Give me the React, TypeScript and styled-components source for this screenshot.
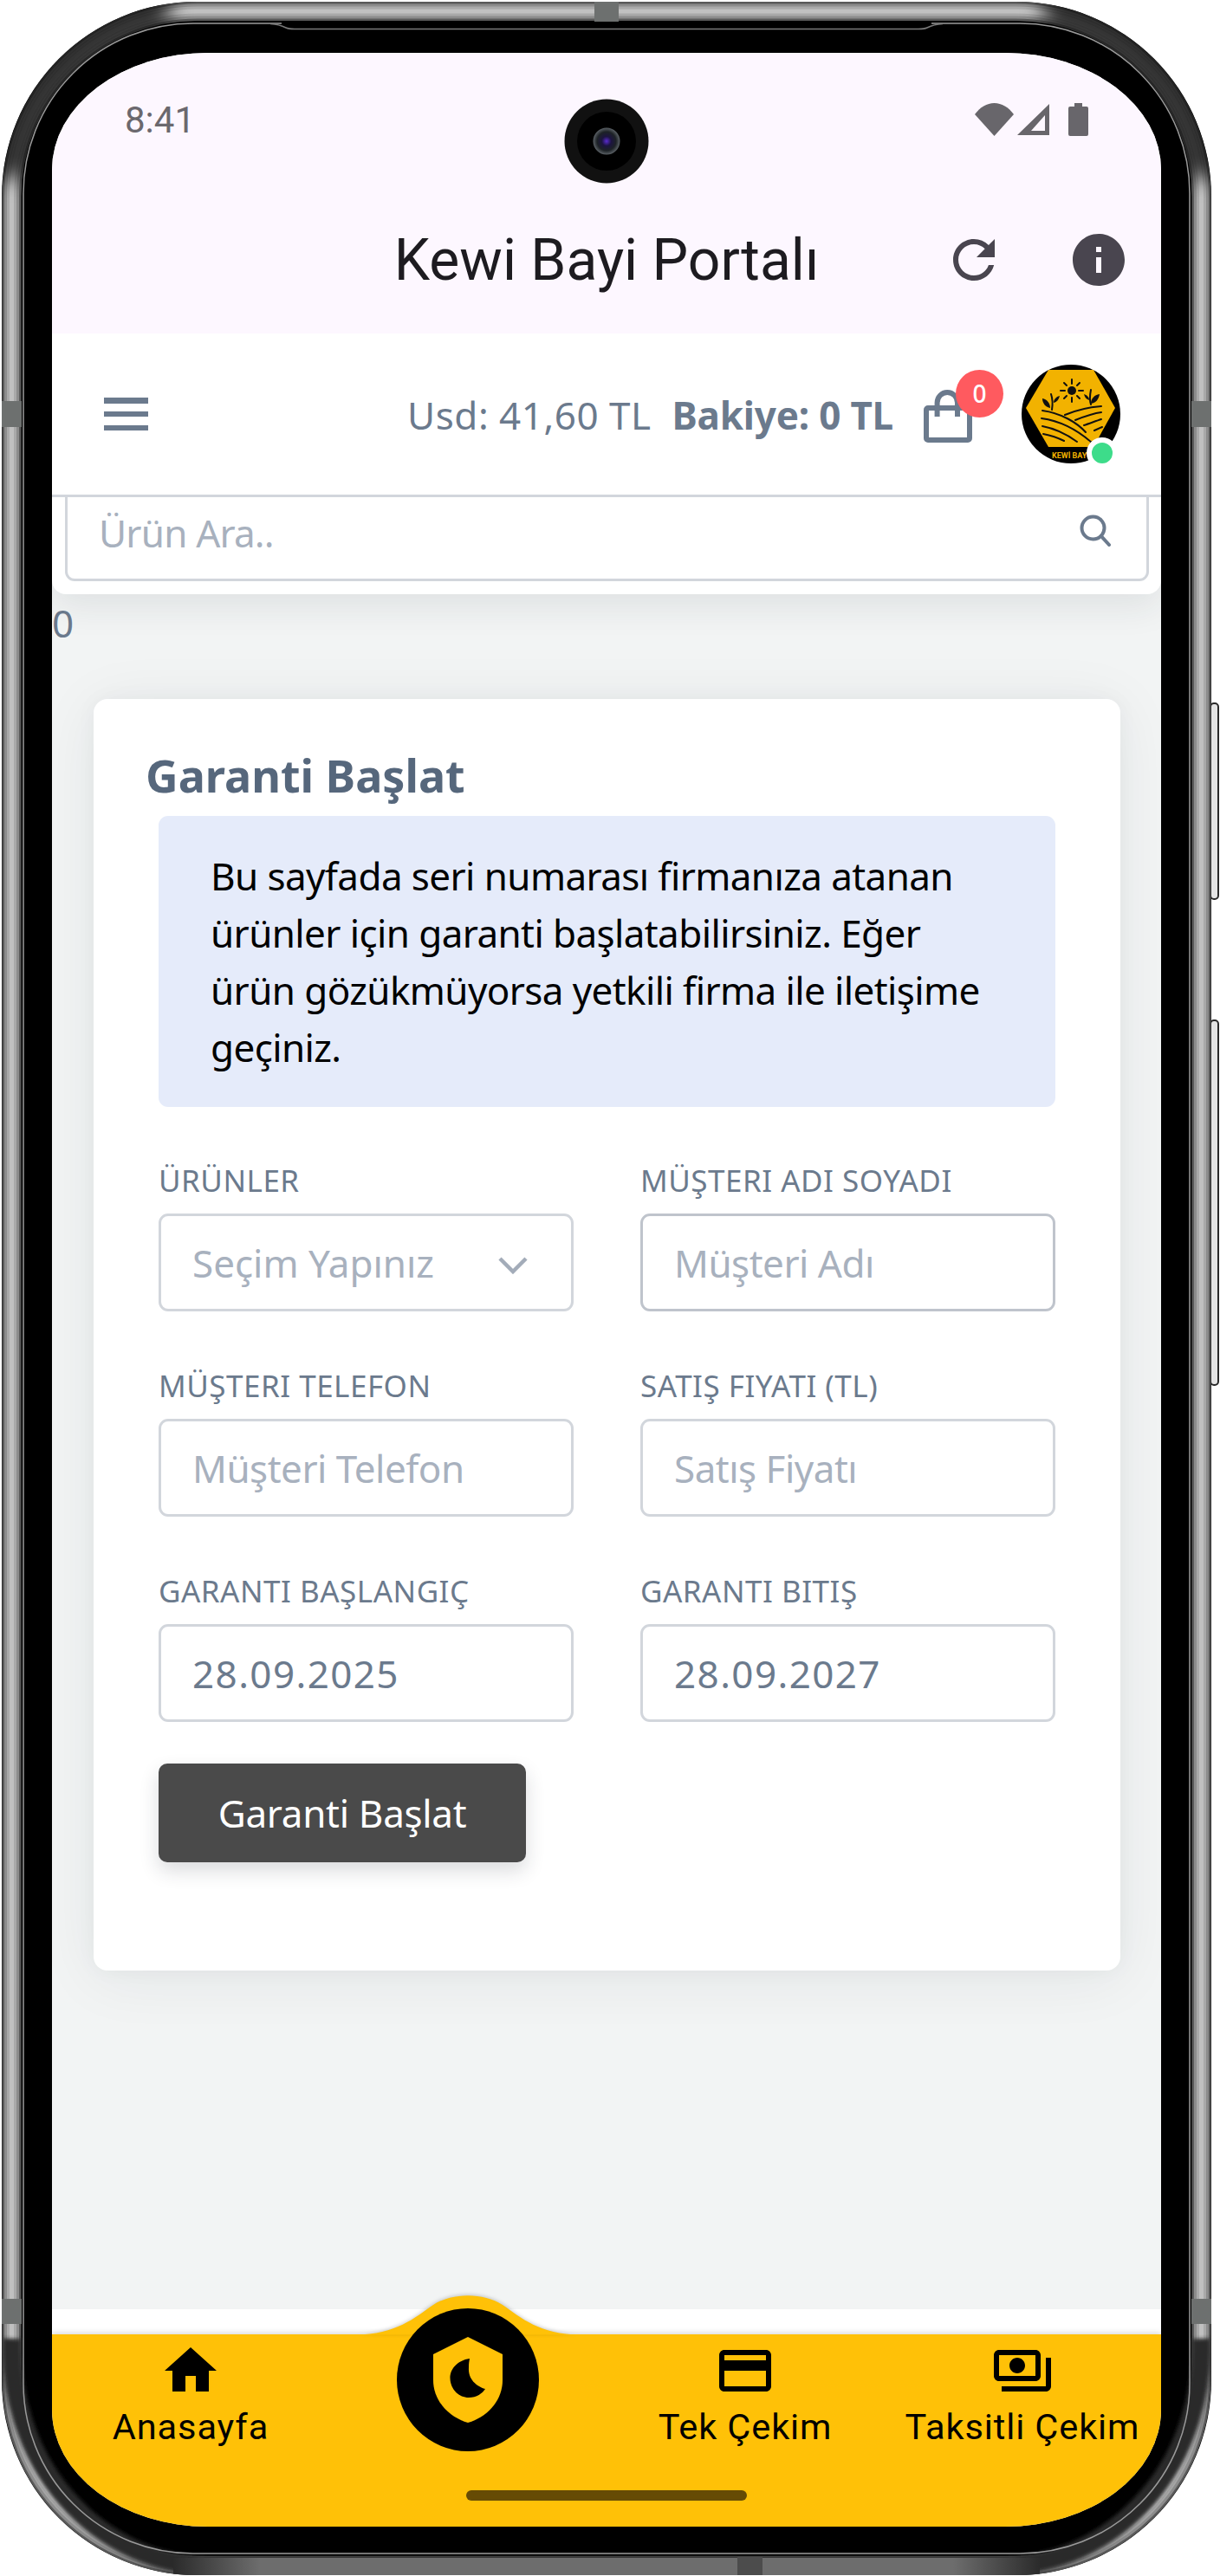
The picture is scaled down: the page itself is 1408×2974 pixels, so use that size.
import React from 'react';
import styled, { createGlobalStyle } from 'styled-components';

const PLEX = `"Noto Sans", "Open Sans", sans-serif`;
const ROBOTO = `Roboto, "Liberation Sans", sans-serif`;
const SLATE = '#6b7a8d';
const YELLOW = '#ffc107';

const Global = createGlobalStyle`
  html, body { margin: 0; padding: 0; background: #fff; }
  * { box-sizing: border-box; }
  #root { width: 1408px; height: 2974px; }
`;

const Device = styled.div`
  position: relative;
  width: 1408px;
  height: 2974px;
  padding: 61px 68px 57px 60px;
  overflow: hidden;
`;
const FrameArt = styled.svg`
  position: absolute;
  left: 0;
  top: 0;
`;
const Screen = styled.div`
  position: relative;
  width: 1280px;
  height: 2856px;
  border-radius: 180px / 135px;
  overflow: hidden;
  display: flex;
  flex-direction: column;
  background: #f2f4f4;
  font-family: ${PLEX};
`;
const AppHeader = styled.header`
  background: #fdf7ff;
  height: 324px;
  flex: none;
  position: relative;
`;
const StatusBar = styled.div`
  height: 154px;
  padding: 0 84px 0 84px;
  display: flex;
  align-items: center;
  justify-content: space-between;
`;
const Clock = styled.span`
  font: 400 42px ${ROBOTO};
  color: #6b686e;
`;
const StatusIcons = styled.div`
  display: flex;
  align-items: center;
  gap: 4px;
`;
const Camera = styled.svg`
  position: absolute;
  left: 591px;
  top: 53px;
`;
const TitleRow = styled.div`
  height: 170px;
  display: grid;
  grid-template-columns: 1fr auto 1fr;
  align-items: center;
`;
const Title = styled.h1`
  grid-column: 2;
  margin: 0;
  font: 400 66px ${ROBOTO};
  color: #1d1b20;
`;
const HeaderActions = styled.div`
  grid-column: 3;
  justify-self: end;
  margin-right: 36px;
  display: flex;
  gap: 72px;
  color: #49454f;
`;
const NavBar = styled.nav`
  flex: none;
  height: 189px;
  background: #fff;
  border-bottom: 3px solid #d2d6dc;
  display: flex;
  align-items: center;
  justify-content: space-between;
  padding: 0 47px 0 60px;
  position: relative;
  z-index: 2;
`;
const NavRight = styled.div`
  display: flex;
  align-items: center;
`;
const UsdText = styled.span`
  font-size: 44px;
  color: ${SLATE};
  letter-spacing: 0.5px;
  margin: 2px 24px 0 0;
`;
const BalanceText = styled.strong`
  font-size: 44px;
  font-weight: 700;
  color: ${SLATE};
  letter-spacing: -0.2px;
  margin: 2px 35px 0 0;
`;
const BagWrap = styled.div`
  position: relative;
  width: 56px;
  height: 61px;
  margin-right: 57px;
  margin-top: 4px;
`;
const Badge = styled.span`
  position: absolute;
  left: 37px;
  top: -23px;
  width: 55px;
  height: 55px;
  border-radius: 50%;
  background: #ff5a5f;
  color: #fff;
  font-size: 28px;
  font-weight: 500;
  display: flex;
  align-items: center;
  justify-content: center;
`;
const AvatarWrap = styled.div`
  position: relative;
  width: 114px;
  height: 114px;
`;
const OnlineDot = styled.span`
  position: absolute;
  left: 75px;
  top: 84px;
  width: 36px;
  height: 36px;
  border-radius: 50%;
  background: #3ddc8a;
  border: 6px solid #fff;
`;
const SearchWrap = styled.div`
  flex: none;
  height: 112px;
  background: #fff;
  padding: 0 14px 0 15px;
  border-radius: 0 0 16px 16px;
  box-shadow: 0 14px 40px rgba(30, 40, 50, 0.09);
  position: relative;
  z-index: 1;
`;
const SearchBox = styled.div`
  position: relative;
  margin-top: -15px;
  height: 112px;
`;
const BaseInput = styled.input<{ $focused?: boolean }>`
  display: block;
  width: 100%;
  height: 100%;
  padding: 0 36px;
  border: 3px solid ${p => (p.$focused ? '#bfc4cc' : '#d2d6dc')};
  border-radius: 11px;
  background: #fff;
  outline: none;
  font-family: ${PLEX};
  font-size: 44px;
  letter-spacing: 1.4px;
  color: ${SLATE};
  &::placeholder { color: #a8b1be; opacity: 1; letter-spacing: -0.5px; }
`;
const SearchInput = styled(BaseInput)`
  &::placeholder { letter-spacing: -0.8px; }
`;
const SearchGlyph = styled.svg`
  position: absolute;
  right: 44px;
  top: 34px;
  color: ${SLATE};
`;
const Main = styled.main`
  flex: 1;
  min-height: 0;
  padding: 0 47px 0 0;
`;
const Stray = styled.div`
  font-size: 44px;
  line-height: 66px;
  color: ${SLATE};
`;
const Card = styled.section`
  margin: 55px 0 0 48px;
  height: 1468px;
  padding: 49px 75px 0;
  background: #fff;
  border-radius: 16px;
  box-shadow: 0 8px 70px rgba(30, 40, 50, 0.07), 0 0 24px rgba(30, 40, 50, 0.04);
`;
const CardTitle = styled.h2`
  margin: 0 0 8px -15px;
  font-size: 52px;
  line-height: 78px;
  font-weight: 700;
  color: #56677c;
`;
const InfoBox = styled.div`
  background: #e5ebfa;
  border-radius: 11px;
  padding: 36px 68px 36px 60px;
  font-size: 44px;
  line-height: 66px;
  letter-spacing: -0.6px;
  color: #000;
  height: 336px;
`;
const FormGrid = styled.div`
  display: grid;
  grid-template-columns: 479px 479px;
  column-gap: 77px;
  row-gap: 58px;
  margin-top: 57px;
`;
const Field = styled.label`
  display: block;
`;
const FieldLabel = styled.span`
  display: block;
  height: 55px;
  margin-bottom: 11px;
  font-size: 35px;
  line-height: 55px;
  letter-spacing: 0.5px;
  color: ${SLATE};
  white-space: nowrap;
`;
const FieldControl = styled.div`
  position: relative;
  height: 113px;
`;
const SelectInput = styled.select`
  appearance: none;
  display: block;
  width: 100%;
  height: 100%;
  padding: 0 36px;
  border: 3px solid #d2d6dc;
  border-radius: 11px;
  background: #fff;
  outline: none;
  font-family: ${PLEX};
  font-size: 44px;
  color: #a8b1be;
`;
const Chevron = styled.svg`
  position: absolute;
  right: 53px;
  top: 50px;
  color: #a3acb9;
  pointer-events: none;
`;
const SubmitButton = styled.button`
  display: block;
  margin-top: 48px;
  width: 424px;
  height: 114px;
  border: none;
  border-radius: 10px;
  background: #4a4a4a;
  color: #fff;
  font-family: ${PLEX};
  font-size: 44px;
  letter-spacing: -0.3px;
  box-shadow: 0 10px 22px rgba(30, 40, 50, 0.16);
`;
const WhiteStrip = styled.div`
  flex: none;
  height: 29px;
  background: #fff;
`;
const TabBar = styled.footer`
  flex: none;
  position: relative;
  height: 222px;
  background: ${YELLOW};
  display: flex;
  box-shadow: 0 -2px 6px rgba(0, 0, 0, 0.15);
`;
const Bump = styled.svg`
  position: absolute;
  left: 350px;
  top: -45px;
  filter: drop-shadow(0 -1px 2px rgba(0, 0, 0, 0.2));
`;
const Tab = styled.div`
  flex: 1;
  position: relative;
  display: flex;
  flex-direction: column;
  align-items: center;
  padding-top: 6px;
  color: #000;
`;
const TabLabel = styled.span`
  font: 400 41.5px/56px ${ROBOTO};
  letter-spacing: 0.9px;
  white-space: nowrap;
  margin-top: 1px;
`;
const CenterAction = styled.svg`
  position: absolute;
  left: 78px;
  top: -30px;
`;
const HomeIndicator = styled.span`
  position: absolute;
  left: 478px;
  top: 180px;
  width: 324px;
  height: 12px;
  border-radius: 6px;
  background: #664b05;
`;

const M = ({ d, size = 72 }: { d: string; size?: number }) => (
  <svg width={size} height={size} viewBox="0 0 24 24" fill="currentColor">
    <path d={d} />
  </svg>
);

const FrameDrawing = () => (
  <FrameArt width="1408" height="2974" viewBox="0 0 1408 2974">
    <defs>
      <filter id="soft" x="-20%" y="-20%" width="140%" height="140%">
        <feGaussianBlur stdDeviation="12" />
      </filter>
      <filter id="fine" x="-20%" y="-20%" width="140%" height="140%">
        <feGaussianBlur stdDeviation="2" />
      </filter>
      <clipPath id="bandClip">
        <rect x="2" y="2" width="1396" height="2971" rx="225" />
      </clipPath>
      <linearGradient id="bottomBand" gradientUnits="userSpaceOnUse" x1="200" y1="0" x2="1200" y2="0">
        <stop offset="0" stopColor="#2b2b2b" />
        <stop offset="0.1" stopColor="#6d6d6d" />
        <stop offset="0.9" stopColor="#6d6d6d" />
        <stop offset="1" stopColor="#2b2b2b" />
      </linearGradient>
    </defs>
    <rect x="1397" y="812" width="9" height="226" rx="4" fill="#e4e4e4" stroke="#2a2a2a" strokeWidth="2" />
    <rect x="1397" y="1178" width="9" height="421" rx="4" fill="#e4e4e4" stroke="#2a2a2a" strokeWidth="2" />
    <rect x="2" y="2" width="1396" height="2971" rx="225" fill="#000" />
    <g fill="none">
      <rect x="13.5" y="13" width="1373" height="2949" rx="214" stroke="#5a5a5a" strokeWidth="22" />
      <rect x="13.5" y="13" width="1373" height="2949" rx="214" stroke="#8c8c8c" strokeWidth="17" />
      <rect x="13.5" y="13" width="1373" height="2949" rx="214" stroke="#a9a9a9" strokeWidth="11" />
      <rect x="13.5" y="13" width="1373" height="2949" rx="214" stroke="#c0c0c0" strokeWidth="5" />
    </g>
    <g clipPath="url(#bandClip)" fill="none" filter="url(#soft)" stroke="#000" strokeWidth="26">
      <path d="M14 205 A 214 214 0 0 1 195 14" />
      <path d="M1205 14 A 214 214 0 0 1 1386 205" />
    </g>
    <g clipPath="url(#bandClip)" fill="none">
      <path d="M14 2700 A 228 250 0 0 0 240 2962 H1160 A 228 250 0 0 0 1386 2700" stroke="#2b2b2b" strokeWidth="22" filter="url(#fine)" />
      <path d="M200 2963 H1200" stroke="url(#bottomBand)" strokeWidth="20" />
    </g>
    <g fill="none" stroke="#9a9a9a" strokeWidth="1.5">
      <rect x="27" y="27" width="1346" height="2921" rx="196" />
    </g>
    <path d="M325 27.5 H1075" stroke="#000" strokeWidth="3" />
    <path d="M312 27.5 Q322 28 330 32 Q333 33.5 340 33.5 H1060 Q1067 33.5 1070 32 Q1078 28 1088 27.5" fill="none" stroke="#7a7a7a" strokeWidth="1.5" />
    <g fill="#6d706f">
      <rect x="2" y="463" width="23" height="30" />
      <rect x="1375" y="463" width="23" height="30" />
      <rect x="2" y="2654" width="23" height="29" />
      <rect x="1375" y="2654" width="23" height="29" />
      <rect x="686" y="2" width="28" height="23" />
    </g>
    <rect x="851" y="2952" width="29" height="21" fill="#4c4c4c" />
  </FrameArt>
);

const AvatarArt = () => (
  <svg width="114" height="114" viewBox="0 0 114 114">
    <circle cx="57" cy="57" r="57" fill="#000" />
    <polygon points="31,6 83,6 108,50 83,95 31,95 5,50" fill="#f2b200" />
    <circle cx="58" cy="30" r="5" fill="#111" />
    <g stroke="#111" strokeWidth="2" strokeLinecap="round">
      <path d="M58 17v5M58 38v5M45 30h5M66 30h5M49 21l3 3M64 36l3 3M67 21l-3 3M52 36l-3 3" />
    </g>
    <g fill="none" stroke="#111" strokeWidth="2" strokeLinecap="round">
      <path d="M24 53c22 3 40 14 50 25" />
      <path d="M23 62c22 3 41 13 58 28" />
      <path d="M24 71c16 3 29 10 40 18" />
      <path d="M25 80c10 2 18 5 24 8" />
      <path d="M50 58c14-6 30-9 42-10" />
      <path d="M62 64c10-4 22-8 30-9" />
      <path d="M72 70c6-2 14-5 20-7" />
      <path d="M84 76l9-4" />
      <path d="M35 52c1-6 1-12-1-18" />
      <path d="M80 46c-2-6-1-12 0-17" />
    </g>
    <g fill="#111">
      <path d="M33 50c-5-1-9-5-9-11 5 1 9 5 9 11z" />
      <path d="M37 44c0-4 3-7 7-8-1 4-3 7-7 8z" />
      <path d="M80 45c0-6 4-10 10-11-1 6-4 10-10 11z" />
      <path d="M78 41c-3-1-5-3-6-7 3 1 6 3 6 7z" />
    </g>
    <text x="35" y="108" fontFamily={ROBOTO} fontSize="9" fontWeight="700" fill="#f2b200">KEWİ BAYİ</text>
  </svg>
);

const Fieldset = ({ label, children, select }: { label: string; children: React.ReactNode; select?: boolean }) => (
  <Field>
    <FieldLabel>{label}</FieldLabel>
    <FieldControl>
      {children}
      {select && (
        <Chevron width="34" height="20" viewBox="0 0 34 20" fill="none" stroke="currentColor" strokeWidth="4.5">
          <path d="M2 2l15 15L32 2" />
        </Chevron>
      )}
    </FieldControl>
  </Field>
);

export default function App() {
  return (
    <Device>
      <Global />
      <FrameDrawing />
      <Screen>
        <AppHeader>
          <StatusBar>
            <Clock>8:41</Clock>
            <StatusIcons>
              <svg width="45" height="38" viewBox="0 0 45 38" fill="#68666b">
                <path d="M0 13C6 5 14 0 22.5 0S39 5 45 13L22.5 38z" />
              </svg>
              <svg width="37" height="36" viewBox="0 0 37 36" fill="#68666b" fillRule="evenodd">
                <path d="M37 0V36H0zM32 13L16 31h16z" />
              </svg>
              <svg width="23" height="38" viewBox="0 0 23 38" fill="#68666b" style={{ marginLeft: 18 }}>
                <path d="M7 0h9v4h5a2 2 0 0 1 2 2v30a2 2 0 0 1-2 2H2a2 2 0 0 1-2-2V6a2 2 0 0 1 2-2h5z" />
              </svg>
            </StatusIcons>
          </StatusBar>
          <Camera width="98" height="98" viewBox="0 0 98 98">
            <defs>
              <radialGradient id="lens">
                <stop offset="0" stopColor="#5a2bd0" />
                <stop offset="0.35" stopColor="#1c1440" />
                <stop offset="0.7" stopColor="#1d2226" />
                <stop offset="1" stopColor="#5b6166" />
              </radialGradient>
            </defs>
            <circle cx="49" cy="49" r="48.5" fill="#111" />
            <circle cx="49" cy="49" r="34" fill="#000" />
            <circle cx="49" cy="49" r="15.5" fill="url(#lens)" />
          </Camera>
          <TitleRow>
            <Title>Kewi Bayi Portalı</Title>
            <HeaderActions>
              <M d="M17.65 6.35A7.958 7.958 0 0 0 12 4c-4.42 0-7.99 3.58-7.99 8s3.57 8 7.99 8c3.73 0 6.84-2.55 7.73-6h-2.08A5.99 5.99 0 0 1 12 18c-3.31 0-6-2.69-6-6s2.69-6 6-6c1.66 0 3.14.69 4.22 1.78L13 11h7V4l-2.35 2.35z" />
              <M d="M12 2C6.48 2 2 6.48 2 12s4.48 10 10 10 10-4.48 10-10S17.52 2 12 2zm1 15h-2v-6h2v6zm0-8h-2V7h2v2z" />
            </HeaderActions>
          </TitleRow>
        </AppHeader>

        <NavBar>
          <svg width="51" height="38" viewBox="0 0 51 38" fill={SLATE}>
            <rect width="51" height="7" />
            <rect y="16" width="51" height="6" />
            <rect y="32" width="51" height="6" />
          </svg>
          <NavRight>
            <UsdText>Usd: 41,60 TL</UsdText>
            <BalanceText>Bakiye: 0 TL</BalanceText>
            <BagWrap>
              <svg width="56" height="61" viewBox="0 0 56 61" fill="none" stroke={SLATE} strokeWidth="6" strokeLinejoin="round">
                <rect x="3" y="21" width="50" height="37" rx="2" />
                <path d="M15.6 31V15a11.7 12 0 0 1 23.4 0V31" />
              </svg>
              <Badge>0</Badge>
            </BagWrap>
            <AvatarWrap>
              <AvatarArt />
              <OnlineDot />
            </AvatarWrap>
          </NavRight>
        </NavBar>

        <SearchWrap>
          <SearchBox>
            <SearchInput placeholder="Ürün Ara.." readOnly />
            <SearchGlyph width="36" height="38" viewBox="0 0 36 38" fill="none" stroke="currentColor" strokeWidth="4" strokeLinecap="round">
              <circle cx="15.5" cy="16.5" r="13" />
              <path d="M25 26l9 10" />
            </SearchGlyph>
          </SearchBox>
        </SearchWrap>

        <Main>
          <Stray>0</Stray>
          <Card>
            <CardTitle>Garanti Başlat</CardTitle>
            <InfoBox>
              Bu sayfada seri numarası firmanıza atanan ürünler için garanti başlatabilirsiniz. Eğer ürün gözükmüyorsa yetkili firma ile iletişime geçiniz.
            </InfoBox>
            <FormGrid>
              <Fieldset label="ÜRÜNLER" select>
                <SelectInput defaultValue="">
                  <option value="">Seçim Yapınız</option>
                </SelectInput>
              </Fieldset>
              <Fieldset label="MÜŞTERI ADI SOYADI">
                <BaseInput $focused placeholder="Müşteri Adı" readOnly />
              </Fieldset>
              <Fieldset label="MÜŞTERI TELEFON">
                <BaseInput placeholder="Müşteri Telefon" readOnly />
              </Fieldset>
              <Fieldset label="SATIŞ FIYATI (TL)">
                <BaseInput placeholder="Satış Fiyatı" readOnly />
              </Fieldset>
              <Fieldset label="GARANTI BAŞLANGIÇ">
                <BaseInput value="28.09.2025" readOnly />
              </Fieldset>
              <Fieldset label="GARANTI BITIŞ">
                <BaseInput value="28.09.2027" readOnly />
              </Fieldset>
            </FormGrid>
            <SubmitButton>Garanti Başlat</SubmitButton>
          </Card>
        </Main>

        <WhiteStrip />
        <TabBar>
          <Bump width="260" height="46" viewBox="0 0 260 46" fill={YELLOW}>
            <path d="M0 45.5C48 45 68 26 90 11c22-14.500 58-14.500 80 0 22 15 42 34 90 34.500z" />
          </Bump>
          <Tab>
            <M d="M10 20v-6h4v6h5v-8h3L12 3 2 12h3v8z" />
            <TabLabel>Anasayfa</TabLabel>
          </Tab>
          <Tab>
            <CenterAction width="164" height="165" viewBox="0 0 164 165">
              <ellipse cx="82" cy="82.500" rx="82" ry="82.500" fill="#000" />
              <path d="M82 33l40 20v30c0 22-16 42-40 49-24-7-40-27-40-49V53z" fill={YELLOW} />
              <path d="M84 58C70 60 61 70 61.500 81 62 94 72 103 83 103c9 0 16-5 19-10-10-3-20-11-19-25 0-5 .500-7 1-10z" fill="#000" />
            </CenterAction>
          </Tab>
          <Tab>
            <M d="M20 4H4c-1.110 0-1.990.890-1.990 2L2 18c0 1.110.890 2 2 2h16c1.110 0 2-.890 2-2V6c0-1.110-.890-2-2-2zm0 14H4v-6h16v6zm0-10H4V6h16v2z" />
            <TabLabel>Tek Çekim</TabLabel>
          </Tab>
          <Tab>
            <M d="M19 14V6c0-1.100-.900-2-2-2H3c-1.100 0-2 .900-2 2v8c0 1.100.900 2 2 2h14c1.100 0 2-.900 2-2zm-2 0H3V6h14v8zm-7-7c-1.660 0-3 1.340-3 3s1.340 3 3 3 3-1.340 3-3-1.340-3-3-3zm13 0v11c0 1.100-.900 2-2 2H4v-2h17V7h2z" />
            <TabLabel>Taksitli Çekim</TabLabel>
          </Tab>
          <HomeIndicator />
        </TabBar>
      </Screen>
    </Device>
  );
}
